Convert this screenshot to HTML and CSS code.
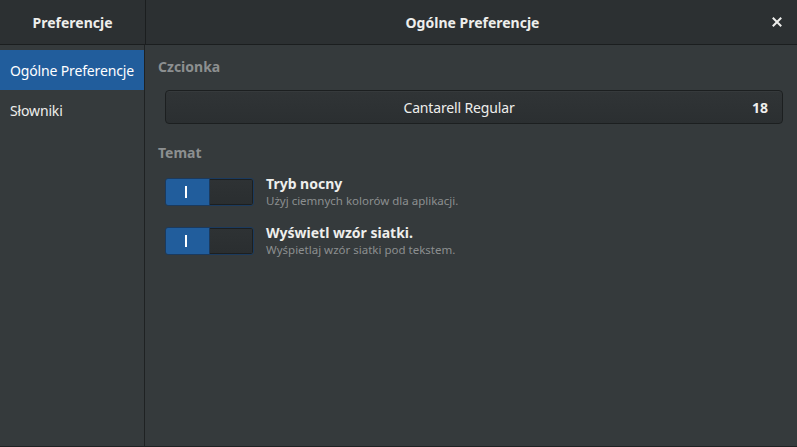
FILE: index.html
```html
<!DOCTYPE html>
<html lang="pl">
<head>
<meta charset="utf-8">
<title>Preferencje</title>
<link rel="stylesheet" href="styles.css">
</head>
<body>
<div class="window">
  <header class="titlebar">
    <div class="title-side">Preferencje</div>
    <div class="title-main">
      <span class="title-text">Ogólne Preferencje</span>
      <button class="close" aria-label="Zamknij">
        <svg width="10" height="10" viewBox="0 0 10 10"><path d="M1.5 1.5 L8.5 8.5 M8.5 1.5 L1.5 8.5" stroke="#eeeeec" stroke-width="2" stroke-linecap="square"/></svg>
      </button>
    </div>
  </header>
  <div class="body">
    <nav class="sidebar">
      <div class="side-item selected">Ogólne Preferencje</div>
      <div class="side-item">Słowniki</div>
    </nav>
    <main class="content">
      <h2 class="section">Czcionka</h2>
      <button class="font-btn">
        <span class="font-name">Cantarell Regular</span>
        <span class="font-size">18</span>
      </button>
      <h2 class="section section-theme">Temat</h2>
      <div class="option">
        <div class="switch"><span class="on"><span class="bar"></span></span><span class="off"></span></div>
        <div class="opt-text">
          <div class="opt-title">Tryb nocny</div>
          <div class="opt-sub">Użyj ciemnych kolorów dla aplikacji.</div>
        </div>
      </div>
      <div class="option">
        <div class="switch"><span class="on"><span class="bar"></span></span><span class="off"></span></div>
        <div class="opt-text">
          <div class="opt-title">Wyświetl wzór siatki.</div>
          <div class="opt-sub">Wyśpietlaj wzór siatki pod tekstem.</div>
        </div>
      </div>
    </main>
  </div>
</div>
</body>
</html>
```

FILE: styles.css
```css
html, body {
  margin: 0;
  padding: 0;
}
body {
  width: 797px;
  height: 447px;
  background: #353a3c;
  font-family: "Noto Sans", "Open Sans", sans-serif;
  color: #eeeeec;
  overflow: hidden;
}
.window {
  display: flex;
  flex-direction: column;
  height: 446px;
  border-bottom: 1px solid #1f2223;
}
.titlebar {
  display: flex;
  height: 44px;
  background: #2c3032;
  border-bottom: 1px solid #1b1e1f;
  font-weight: bold;
  font-size: 14px;
}
.title-side {
  width: 145px;
  border-right: 1px solid #1b1e1f;
  display: flex;
  align-items: center;
  justify-content: center;
}
.title-main {
  flex: 1;
  display: flex;
  align-items: center;
  justify-content: center;
  position: relative;
}
.title-text {
  margin-left: 2px;
}
.close {
  position: absolute;
  right: 15px;
  top: 17px;
  width: 10px;
  height: 10px;
  padding: 0;
  border: 0;
  background: none;
  display: flex;
}
.body {
  flex: 1;
  display: flex;
}
.sidebar {
  width: 144px;
  border-right: 1px solid #1f2223;
  padding-top: 5px;
  display: flex;
  flex-direction: column;
}
.side-item {
  height: 40px;
  display: flex;
  align-items: center;
  padding-left: 10px;
  font-size: 14px;
  letter-spacing: -0.15px;
  color: #eeeeec;
}
.side-item.selected {
  background: #215d9c;
  color: #ffffff;
}
.content {
  flex: 1;
  padding: 12px 14px 0 13px;
  display: flex;
  flex-direction: column;
}
.section {
  margin: 0;
  font-size: 14px;
  font-weight: bold;
  color: #8c8f90;
  line-height: 20px;
  height: 20px;
}
.font-btn {
  margin: 13px 0 0 7px;
  height: 34px;
  box-sizing: border-box;
  border: 1px solid #1c1f20;
  border-radius: 4px;
  background: linear-gradient(#303436, #2b2f31);
  box-shadow: inset 0 1px rgba(255,255,255,0.03);
  color: #eeeeec;
  font-family: inherit;
  font-size: 14px;
  display: flex;
  align-items: center;
  padding: 0 14px;
  position: relative;
}
.font-name {
  flex: 1;
  text-align: center;
  padding-right: 14px;
  letter-spacing: -0.15px;
}
.font-size {
  font-weight: bold;
}
.section-theme {
  margin-top: 19px;
}
.option {
  display: flex;
  align-items: flex-start;
  margin: 15px 0 0 7px;
}
.option + .option {
  margin-top: 18px;
}
.switch {
  width: 89px;
  height: 28px;
  box-sizing: border-box;
  border: 1px solid #1b3a5e;
  border-radius: 3px;
  display: flex;
  overflow: hidden;
}
.switch .on {
  width: 43px;
  background: #215d9c;
  display: flex;
  align-items: center;
  justify-content: center;
  border-right: 1px solid #1b3a5e;
}
.switch .bar {
  width: 2px;
  height: 12px;
  background: #ffffff;
  margin-right: 3px;
}
.switch .off {
  flex: 1;
  background: linear-gradient(#2e3234, #2a2e30);
  border-radius: 0 2px 2px 0;
  border: 1px solid #1c1f20;
  border-left: 0;
}
.opt-text {
  margin-left: 12px;
  margin-top: -3px;
  display: flex;
  flex-direction: column;
}
.opt-title {
  font-size: 14px;
  font-weight: bold;
  line-height: 18px;
  color: #eeeeec;
}
.opt-sub {
  font-size: 11.5px;
  line-height: 16px;
  color: #8c8f90;
}
```
